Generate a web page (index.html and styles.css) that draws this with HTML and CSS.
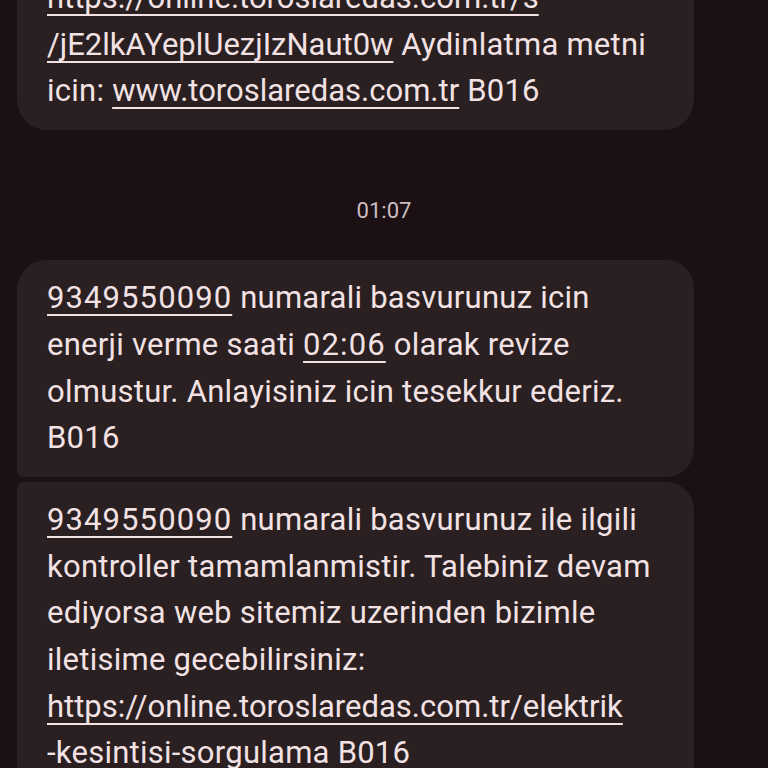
FILE: index.html
```html
<!DOCTYPE html>
<html>
<head>
<meta charset="utf-8">
<link rel="stylesheet" href="styles.css">
</head>
<body>
<div class="thread">
  <div class="bubble single first">
    <p class="msg"><a class="link url">https://online.toroslaredas.com.tr/s<br>/jE2lkAYeplUezjIzNaut0w</a> Aydinlatma metni<br>icin: <a class="link url">www.toroslaredas.com.tr</a> B016</p>
  </div>
  <div class="stamp">01:07</div>
  <div class="bubble top">
    <p class="msg"><a class="link num">9349550090</a> numarali basvurunuz icin<br>enerji verme saati <a class="link num">02:06</a> olarak revize<br>olmustur. Anlayisiniz icin tesekkur ederiz.<br>B016</p>
  </div>
  <div class="bubble bottom">
    <p class="msg"><a class="link num">9349550090</a> numarali basvurunuz ile ilgili<br>kontroller tamamlanmistir. Talebiniz devam<br>ediyorsa web sitemiz uzerinden bizimle<br>iletisime gecebilirsiniz:<br><a class="link url">https://online.toroslaredas.com.tr/elektrik</a><br>-kesintisi-sorgulama B016</p>
  </div>
</div>
</body>
</html>
```
FILE: styles.css
```css
html, body {
  margin: 0;
  padding: 0;
  background: #1b1013;
  height: 768px;
  overflow: hidden;
}
.thread {
  display: flex;
  flex-direction: column;
  align-items: flex-start;
  padding-left: 17px;
  font-family: Roboto, "Noto Sans", sans-serif;
  color: #f3e2e4;
}
.bubble {
  width: 677px;
  box-sizing: border-box;
  background: #2a1f21;
  padding: 15px 30px 15px 30px;
  border-radius: 30px;
}
.first {
  margin-top: -40px;
}
.top {
  border-radius: 30px 28px 28px 6px;
}
.bottom {
  margin-top: 5px;
  border-radius: 6px 28px 28px 30px;
}
.msg {
  margin: 0;
  font-size: 31px;
  line-height: 46.7px;
  letter-spacing: 0.25px;
  white-space: nowrap;
}
.link {
  color: inherit;
  text-decoration: underline;
  text-decoration-thickness: 2px;
  text-underline-offset: 6px;
  text-decoration-skip-ink: none;
}
.num {
  letter-spacing: 1.1px;
}
.url {
  letter-spacing: 0;
}
.stamp {
  align-self: center;
  margin-left: -17px;
  margin-top: 66px;
  margin-bottom: 34px;
  font-size: 22px;
  line-height: 30px;
  color: #cdbdc0;
}
```
